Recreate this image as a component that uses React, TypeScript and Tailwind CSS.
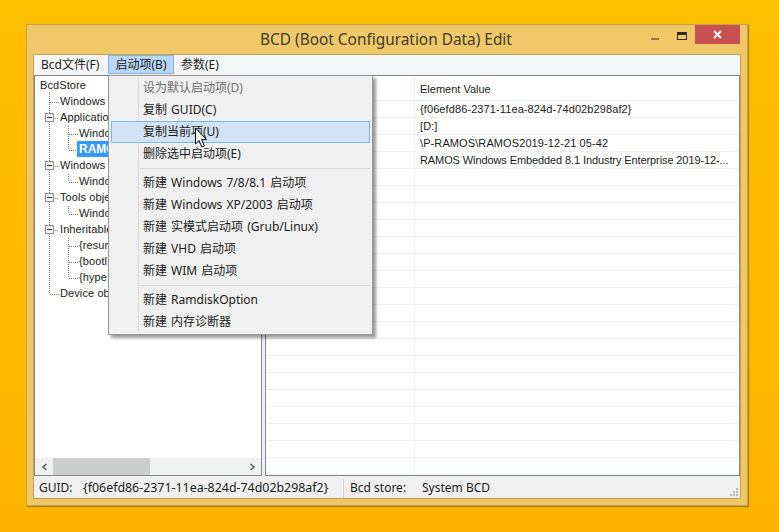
import React from 'react';

const treeRows = [
  { label: 'BcdStore', indent: 'pl-[5px]' },
  { label: 'Windows E', indent: 'pl-[25px]' },
  { label: 'Application', indent: 'pl-[25px]' },
  { label: 'Windo', indent: 'pl-[44px]' },
  { label: 'RAMO', indent: 'pl-[42px]', selected: true },
  { label: 'Windows r', indent: 'pl-[25px]' },
  { label: 'Windo', indent: 'pl-[44px]' },
  { label: 'Tools obje', indent: 'pl-[25px]' },
  { label: 'Windo', indent: 'pl-[44px]' },
  { label: 'Inheritable', indent: 'pl-[25px]' },
  { label: '{resum', indent: 'pl-[44px]' },
  { label: '{bootl', indent: 'pl-[44px]' },
  { label: '{hype', indent: 'pl-[44px]' },
  { label: 'Device obj', indent: 'pl-[25px]' },
];

const values = [
  '{f06efd86-2371-11ea-824d-74d02b298af2}',
  '[D:]',
  '\\P-RAMOS\\RAMOS2019-12-21 05-42',
  'RAMOS Windows Embedded 8.1 Industry Enterprise 2019-12-...',
];

const menuItems: (string | null)[] = [
  '设为默认启动项(D)',
  '复制 GUID(C)',
  '复制当前项(U)',
  '删除选中启动项(E)',
  null,
  '新建 Windows 7/8/8.1 启动项',
  '新建 Windows XP/2003 启动项',
  '新建 实模式启动项 (Grub/Linux)',
  '新建 VHD 启动项',
  '新建 WIM 启动项',
  null,
  '新建 RamdiskOption',
  '新建 内存诊断器',
];

const tableRows = Array.from({ length: 22 }, (_, i) => i);

const TreeLines = () => (
  <svg className="absolute left-0 top-0" width="80" height="240" fill="none">
    <g stroke="#808080" strokeDasharray="1 1" shapeRendering="crispEdges">
      <path d="M14.5 16V218M14.5 26H24M14.5 218H24" />
      <path d="M33.5 50V74M33.5 58H43M33.5 74H43" />
      <path d="M33.5 98V106M33.5 106H43" />
      <path d="M33.5 130V138M33.5 138H43" />
      <path d="M33.5 162V202M33.5 170H43M33.5 186H43M33.5 202H43" />
      <path d="M20 42H24M20 90H24M20 122H24M20 154H24" />
    </g>
    {[42, 90, 122, 154].map(y => (
      <g key={y} shapeRendering="crispEdges">
        <rect x="10.5" y={y - 4.5} width="8" height="8" fill="#f4f4f4" stroke="#8e8f8f" />
        <rect x="12" y={y - 1} width="5" height="1" fill="#333" />
      </g>
    ))}
  </svg>
);

export default function App() {
  return (
    <div
      className="h-[532px] w-[779px] overflow-hidden bg-gradient-to-b from-[#ffc000] to-[#fdb400] pl-[26px] pt-[24px] text-[12px] text-[#1a1a1a]"
      style={{ fontFamily: '"Noto Sans", "Noto Sans CJK SC", sans-serif' }}
    >
      <div className="relative flex h-[482px] w-[722px] flex-col border border-[#c7a04e] bg-[#f0c868] px-[6px] pb-[6px] shadow-[1px_1px_1px_rgba(120,90,20,0.6)]">
        {/* Title bar */}
        <div className="relative flex h-[29px] shrink-0 items-center justify-center pr-[2px] text-[15.4px] text-[#403a2c]">
          BCD (Boot Configuration Data) Edit
          <div className="absolute right-[1px] top-0 flex items-start">
            <div className="mr-[18px] mt-[13px] h-[2px] w-[8px] bg-[#977b3c]" />
            <div className="mr-[8px] mt-[7px] h-[8px] w-[10px] border border-t-[3px] border-[#2b2b2b]" />
            <div className="flex h-[19px] w-[45px] items-center justify-center bg-[#c75050]">
              <svg width="9" height="9" viewBox="0 0 9 9">
                <path d="M1 1L8 8M8 1L1 8" stroke="#fff" strokeWidth="2" />
              </svg>
            </div>
          </div>
        </div>

        {/* Client area */}
        <div className="flex min-h-0 flex-1 flex-col border border-[#c7a04e] bg-[#f0f0f0]">
          <div className="flex h-[19px] shrink-0 items-center bg-[#f5f6f7] pt-[1px] text-[12px]">
            <div className="w-[74px] pl-[7px]">Bcd文件(F)</div>
            <div className="-mt-[1px] flex h-[19px] w-[66px] items-center justify-center border border-[#7eb4ea] bg-[#b8d6f5] pt-[1px]">
              启动项(B)
            </div>
            <div className="px-[7px]">参数(E)</div>
          </div>

          <div className="flex min-h-0 flex-1 pt-[1px]">
            {/* Tree */}
            <div
              className="relative flex w-[228px] flex-col border border-[#828790] bg-white text-[11px]"
              style={{ fontFamily: '"Liberation Sans", sans-serif' }}
            >
              <TreeLines />
              <div className="relative flex-1 overflow-hidden pt-[1px]">
                {treeRows.map((row, i) => (
                  <div key={i} className={`flex h-[16px] items-center leading-[16px] ${row.indent}`}>
                    {row.selected ? (
                      <span className="bg-[#3399ff] px-[2px] text-[12px] font-bold text-white">{row.label}</span>
                    ) : (
                      <span className="whitespace-nowrap tracking-[0.1px]">{row.label}</span>
                    )}
                  </div>
                ))}
              </div>
              <div className="flex h-[17px] shrink-0 items-center bg-[#f0f0f0] px-[1px]">
                <div className="flex w-[17px] justify-center">
                  <svg width="8" height="8" viewBox="0 0 8 8" fill="none">
                    <path d="M5.5 1L2 4L5.5 7" stroke="#606060" strokeWidth="1.6" />
                  </svg>
                </div>
                <div className="h-[17px] w-[97px] bg-[#cdcdcd]" />
                <div className="flex-1" />
                <div className="flex w-[17px] justify-center">
                  <svg width="8" height="8" viewBox="0 0 8 8" fill="none">
                    <path d="M2.5 1L6 4L2.5 7" stroke="#606060" strokeWidth="1.6" />
                  </svg>
                </div>
              </div>
            </div>

            <div className="w-[3px] shrink-0" />

            {/* Element table */}
            <div
              className="flex min-w-0 flex-1 flex-col overflow-hidden border border-[#828790] bg-white text-[11px]"
              style={{ fontFamily: '"Liberation Sans", sans-serif' }}
            >
              <div className="flex h-[25px] shrink-0 border-b border-[#e5edf8] pt-[1px]">
                <div className="w-[149px] border-r border-[#e5edf8]" />
                <div className="flex-1 pl-[5px] pt-[1px] leading-[23px]">Element Value</div>
              </div>
              {tableRows.map(i => (
                <div key={i} className="flex h-[17px] shrink-0 border-b border-[#f0f0f0] leading-[17px]">
                  <div className="w-[149px] border-r border-[#f0f0f0]" />
                  <div className={`flex-1 overflow-hidden whitespace-nowrap pl-[5px] ${i === 3 ? 'tracking-[-0.1px]' : 'tracking-[0.1px]'}`}>
                    {values[i]}
                  </div>
                </div>
              ))}
            </div>
          </div>

          {/* Status bar */}
          <div className="relative flex h-[22px] shrink-0 items-center bg-[#f0f0f0] pt-[2px]">
            <span className="ml-[5px] w-[44px]">GUID:</span>
            <span className="w-[260px] whitespace-nowrap text-[12.4px]">{'{f06efd86-2371-11ea-824d-74d02b298af2}'}</span>
            <div className="h-[19px] w-px bg-[#d9d9d9]" />
            <span className="ml-[6px] w-[72px]">Bcd store:</span>
            <span>System BCD</span>
            <div className="absolute bottom-[2px] right-[2px] grid grid-cols-3 gap-[1px]">
              {[0, 0, 1, 0, 1, 1, 1, 1, 1].map((on, i) => (
                <div key={i} className={on ? 'h-[2px] w-[2px] bg-[#b8b8b8]' : 'h-[2px] w-[2px]'} />
              ))}
            </div>
          </div>
        </div>

        {/* Dropdown menu */}
        <div className="absolute left-[81px] top-[50px] w-[265px] border border-[#979797] bg-[#f0f0f0] p-[1px] shadow-[3px_3px_3px_rgba(0,0,0,0.4)]">
          <div className="absolute bottom-[2px] left-[29px] top-[2px] w-px bg-[#dcdcdc]" />
          {menuItems.map((item, i) =>
            item === null ? (
              <div key={i} className="flex h-[7px] items-center pl-[30px] pr-[1px]">
                <div className="h-px w-full bg-[#d7d7d7]" />
              </div>
            ) : (
              <div
                key={i}
                className={`relative flex h-[22px] items-center whitespace-pre [word-spacing:1px] ${
                  i === 2 ? 'mx-[1px] border border-[#7eb4ea] bg-[#d1e2f2] pl-[31px]' : 'pl-[33px]'
                } ${i === 0 ? 'text-[#6d6d6d]' : ''}`}
              >
                {item}
              </div>
            )
          )}
        </div>

        {/* Mouse pointer */}
        <svg className="absolute left-[167px] top-[102px]" width="14" height="22" viewBox="0 0 14 22">
          <path d="M1.5 1V17L5 13.5L7.8 20L10.4 18.9L7.6 12.6H12.5Z" fill="#fff" stroke="#000" />
        </svg>
      </div>
    </div>
  );
}
